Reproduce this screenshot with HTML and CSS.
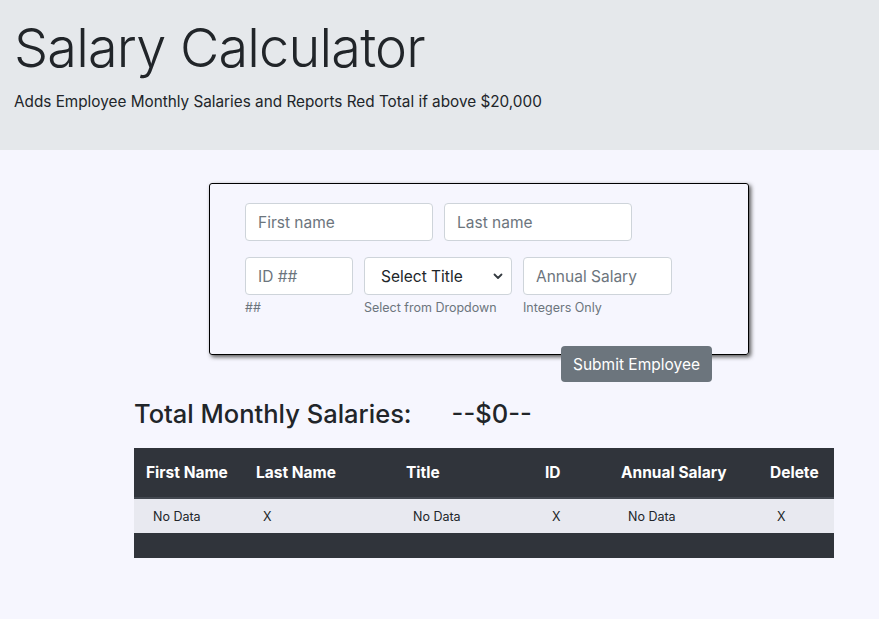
FILE: index.html
```html
<!DOCTYPE html>
<html lang="en">
<head>
<meta charset="utf-8">
<title>Salary Calculator</title>
<link rel="stylesheet" href="styles.css">
</head>
<body>
<header class="jumbo">
  <h1 class="title">Salary Calculator</h1>
  <p class="lead">Adds Employee Monthly Salaries and Reports Red Total if above $20,000</p>
</header>
<main class="main">
  <form class="card">
    <div class="row">
      <input class="field w-name" type="text" placeholder="First name">
      <input class="field w-name" type="text" placeholder="Last name">
    </div>
    <div class="row row2">
      <div class="group">
        <input class="field w-id" type="text" placeholder="ID ##">
        <small class="help">##</small>
      </div>
      <div class="group">
        <div class="select w-sel">
          <span>Select Title</span>
          <svg class="caret" width="10" height="8" viewBox="0 0 10 8"><path d="M1.5 2.5 L5 6 L8.5 2.5" fill="none" stroke="#343a40" stroke-width="1.8" stroke-linecap="round" stroke-linejoin="round"/></svg>
        </div>
        <small class="help">Select from Dropdown</small>
      </div>
      <div class="group">
        <input class="field w-sal" type="text" placeholder="Annual Salary">
        <small class="help">Integers Only</small>
      </div>
    </div>
  </form>
  <div class="btn-row">
    <button class="btn" type="button">Submit Employee</button>
  </div>
  <h3 class="total"><span>Total Monthly Salaries:</span><span class="amount">--$0--</span></h3>
  <table class="tbl">
    <thead>
      <tr>
        <th class="c1">First Name</th>
        <th class="c2">Last Name</th>
        <th class="c3">Title</th>
        <th class="c4">ID</th>
        <th class="c5">Annual Salary</th>
        <th class="c6">Delete</th>
      </tr>
    </thead>
    <tbody>
      <tr>
        <td>No Data</td>
        <td>X</td>
        <td>No Data</td>
        <td>X</td>
        <td>No Data</td>
        <td>X</td>
      </tr>
    </tbody>
    <tfoot>
      <tr><td colspan="6"></td></tr>
    </tfoot>
  </table>
</main>
</body>
</html>
```
FILE: styles.css
```css
* { box-sizing: border-box; }
html, body {
  margin: 0;
  padding: 0;
  background: #f6f6fe;
  color: #212529;
  font-family: "Inter", "Roboto", sans-serif;
}
.jumbo {
  background: #e5e8eb;
  height: 150px;
  padding: 16px 14px 0;
}
.title {
  margin: 0;
  font-size: 54px;
  font-weight: 300;
  line-height: 1.2;
  letter-spacing: -0.8px;
}
.lead {
  margin: 9px 0 0;
  font-size: 15.3px;
  line-height: 24px;
}
.main {
  padding-top: 33px;
  display: flex;
  flex-direction: column;
}
.card {
  margin: 0 0 0 209px;
  width: 540px;
  height: 172px;
  border: 1px solid #000;
  border-radius: 3px;
  box-shadow: 2px 2px 4px #555;
  padding: 19px 35px;
  display: flex;
  flex-direction: column;
}
.row {
  display: flex;
  gap: 11px;
}
.row2 { margin-top: 16px; }
.group {
  display: flex;
  flex-direction: column;
}
.field, .select {
  height: 38px;
  border: 1px solid #ced4da;
  border-radius: 4px;
  background: #fff;
  font-family: inherit;
  font-size: 15.5px;
  padding: 0 12px;
  color: #495057;
}
.field::placeholder { color: #6c757d; }
.w-name { width: 188px; }
.w-id { width: 108px; }
.w-sel { width: 148px; }
.w-sal { width: 149px; }
.select {
  display: flex;
  align-items: center;
  justify-content: space-between;
  padding: 0 8px 0 16px;
  color: #212529;
}
.help {
  margin-top: 5px;
  font-size: 12.5px;
  color: #6c757d;
}
.btn-row {
  display: flex;
  margin: -9px 0 0 561px;
}
.btn {
  background: #6c757d;
  color: #fff;
  border: none;
  border-radius: 4px;
  height: 36px;
  width: 151px;
  font-family: inherit;
  font-size: 15.5px;
  padding: 0;
}
.total {
  margin: 14px 0 0 134px;
  font-size: 25.5px;
  font-weight: 500;
  line-height: 36px;
  display: flex;
}
.amount { margin-left: 40px; }
.tbl {
  margin: 16px 0 0 134px;
  width: 700px;
  border-collapse: collapse;
  table-layout: fixed;
}
.tbl th {
  background: #30343b;
  color: #fff;
  text-align: left;
  font-weight: 700;
  font-size: 15.5px;
  height: 50px;
  padding: 0 0 0 12px;
  border-bottom: 2px solid #434850;
}
.c1 { width: 110px; }
.c2 { width: 150px; }
.c3 { width: 139px; }
.c4 { width: 76px; }
.c5 { width: 149px; }
.c6 { width: 76px; }
.tbl tbody td {
  background: #e8e9f0;
  height: 35px;
  padding: 0 0 0 19px;
  font-size: 12.5px;
  color: #212529;
}
.tbl tfoot td {
  background: #30343b;
  height: 25px;
  padding: 0;
}
```
